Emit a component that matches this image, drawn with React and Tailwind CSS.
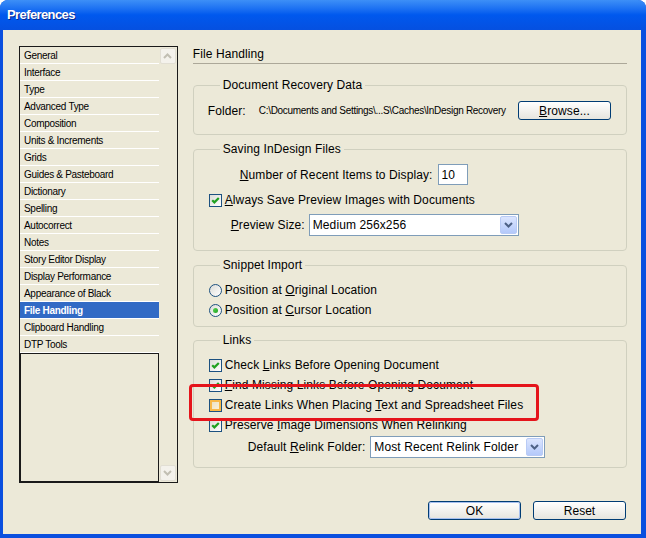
import React from 'react';

const listItems = [
  'General',
  'Interface',
  'Type',
  'Advanced Type',
  'Composition',
  'Units & Increments',
  'Grids',
  'Guides & Pasteboard',
  'Dictionary',
  'Spelling',
  'Autocorrect',
  'Notes',
  'Story Editor Display',
  'Display Performance',
  'Appearance of Black',
  'File Handling',
  'Clipboard Handling',
  'DTP Tools',
];

function Checkbox({ checked, hover }) {
  return (
    <span className="relative inline-flex h-[13px] w-[13px] shrink-0 items-center justify-center border border-[#1c5180] bg-gradient-to-br from-[#dcdcd7] to-white">
      {hover && <span className="absolute inset-0 border-2 border-[#f8b94a] bg-[#fde3a8]/40" />}
      {checked && (
        <svg width="11" height="11" viewBox="0 0 11 11" className="relative">
          <path d="M2.2 5.2 L4.4 7.4 L8.8 3" stroke="#21a121" strokeWidth="2.2" fill="none" />
        </svg>
      )}
    </span>
  );
}

function Radio({ checked }) {
  return (
    <span className="inline-flex h-[13px] w-[13px] shrink-0 items-center justify-center rounded-full border border-[#1c5180] bg-gradient-to-br from-[#dcdcd7] to-white">
      {checked && <span className="h-[5px] w-[5px] rounded-full bg-gradient-to-br from-[#55d651] to-[#21a121]" />}
    </span>
  );
}

function Select({ value, className }) {
  return (
    <div className={`flex h-[22px] items-center border border-[#7f9db9] bg-white pl-[3px] pr-[1px] ${className}`}>
      <span className="flex-1 text-[12px] leading-[14px]">{value}</span>
      <span className="flex h-[18px] w-[17px] items-center justify-center rounded-[2px] border border-[#b9cbf5] bg-gradient-to-b from-[#dbe5fe] to-[#b4c9fa]">
        <svg width="9" height="6" viewBox="0 0 9 6">
          <path d="M1 1 L4.5 4.5 L8 1" stroke="#4d6185" strokeWidth="2" fill="none" />
        </svg>
      </span>
    </div>
  );
}

function Button({ children, primary }) {
  return (
    <button className="flex h-[19px] w-[93px] items-center justify-center rounded-[3px] border border-[#003c74] bg-gradient-to-b from-white to-[#e6e5de] p-0 text-[12px] leading-[14px]">
      <span
        className={`flex h-full w-full items-center justify-center rounded-[2px] ${primary ? 'border border-[#a7c0ef]' : ''}`}
      >
        {children}
      </span>
    </button>
  );
}

function Fieldset({ title, className, children }) {
  return (
    <fieldset className={`rounded-[4px] border border-[#d0d0bf] px-[15px] ${className}`}>
      <legend className="ml-[11px] px-[3px] text-[12px] leading-[14px]">{title}</legend>
      {children}
    </fieldset>
  );
}

function ScrollArrow({ down }) {
  return (
    <div className="flex h-[16px] w-[16px] items-center justify-center rounded-[2px] border border-[#e2dfd4] bg-[#f4f2ec]">
      <svg width="9" height="6" viewBox="0 0 9 6">
        <path d={down ? 'M1 1 L4.5 4.5 L8 1' : 'M1 5 L4.5 1.5 L8 5'} stroke="#c2bfb3" strokeWidth="2" fill="none" />
      </svg>
    </div>
  );
}

export default function App() {
  return (
    <div className="h-[538px] w-[646px] bg-white text-black [font-family:'Liberation_Sans',Arial,sans-serif]">
      <div className="flex h-full flex-col overflow-hidden rounded-t-[8px] bg-[#0a4fdf]">
        <div className="flex h-[30px] shrink-0 items-center bg-gradient-to-b from-[#3d8ff7] via-[#0058ee] to-[#0550e0] pl-[7px]">
          <span className="text-[13px] font-bold tracking-[-0.6px] text-white [text-shadow:1px_1px_0_#0b2a8f]">
            Preferences
          </span>
        </div>

        <div className="mb-[4px] ml-[3px] mr-[5px] flex flex-1 flex-col bg-[#ece9d8] pl-[16px] pr-[14px] pt-[16px]">
          <div className="flex h-[437px]">
            {/* category list */}
            <div className="flex w-[159px] border border-[#1a1a1a]">
              <div className="flex w-[139px] flex-col">
                {listItems.map((item) => (
                  <div
                    key={item}
                    className={`flex h-[17px] shrink-0 items-center border-b border-white pl-[4px] text-[10px] tracking-[-0.3px] ${
                      item === 'File Handling' ? 'bg-[#316ac5] font-bold text-white' : 'bg-[#ece9d8]'
                    }`}
                  >
                    {item}
                  </div>
                ))}
                <div className="flex-1 border border-[#1a1a1a]" />
              </div>
              <div className="flex flex-1 flex-col items-center justify-between bg-[#ece9d8] py-[1px]">
                <ScrollArrow />
                <ScrollArrow down />
              </div>
            </div>

            {/* right panel */}
            <div className="relative ml-[15px] w-[435px] text-[12px] leading-[14px] tracking-[0.1px]">
              <div className="h-[18px] border-b border-[#aca899] pt-[1px]">File Handling</div>

              <Fieldset title="Document Recovery Data" className="mt-[14px] pb-[14px]">
                <div className="mt-[9px] flex h-[19px] items-center">
                  <span className="-ml-[1px]">Folder:</span>
                  <span className="ml-[13px] text-[10px] tracking-[-0.3px]">
                    C:\Documents and Settings\...S\Caches\InDesign Recovery
                  </span>
                  <div className="ml-auto">
                    <Button>
                      <u className="underline-offset-1">B</u>rowse...
                    </Button>
                  </div>
                </div>
              </Fieldset>

              <Fieldset title="Saving InDesign Files" className="mt-[7px] pb-[14px]">
                <div className="mt-[8px] flex h-[21px] items-center">
                  <span className="ml-[31px]">
                    <u className="underline-offset-1">N</u>umber of Recent Items to Display:
                  </span>
                  <span className="ml-[5px] flex h-[21px] w-[30px] items-center border border-[#7f9db9] bg-white pl-[3px]">
                    10
                  </span>
                </div>
                <div className="mt-[7px] flex h-[16px] items-center">
                  <Checkbox checked />
                  <span className="ml-[3px]">
                    <u className="underline-offset-1">A</u>lways Save Preview Images with Documents
                  </span>
                </div>
                <div className="mt-[6px] flex h-[22px] items-center">
                  <span className="ml-[22px]">
                    <u className="underline-offset-1">P</u>review Size:
                  </span>
                  <Select value="Medium 256x256" className="ml-[4px] w-[210px]" />
                </div>
              </Fieldset>

              <Fieldset title="Snippet Import" className="mt-[7px] pb-[8px]">
                <div className="mt-[10px] flex h-[16px] items-center">
                  <Radio />
                  <span className="ml-[3px]">
                    Position at <u className="underline-offset-1">O</u>riginal Location
                  </span>
                </div>
                <div className="mt-[4px] flex h-[16px] items-center">
                  <Radio checked />
                  <span className="ml-[3px]">
                    Position at <u className="underline-offset-1">C</u>ursor Location
                  </span>
                </div>
              </Fieldset>

              <Fieldset title="Links" className="mt-[6px] pb-[9px]">
                <div className="mt-[10px] flex h-[16px] items-center">
                  <Checkbox checked />
                  <span className="ml-[3px]">
                    Check <u className="underline-offset-1">L</u>inks Before Opening Document
                  </span>
                </div>
                <div className="mt-[4px] flex h-[16px] items-center">
                  <Checkbox checked />
                  <span className="ml-[3px]">
                    <u className="underline-offset-1">F</u>ind Missing Links Before Opening Document
                  </span>
                </div>
                <div className="mt-[4px] flex h-[16px] items-center">
                  <Checkbox hover />
                  <span className="ml-[3px]">
                    Create Links When Placing <u className="underline-offset-1">T</u>ext and Spreadsheet Files
                  </span>
                </div>
                <div className="mt-[4px] flex h-[16px] items-center">
                  <Checkbox checked />
                  <span className="ml-[3px]">
                    Preserve <u className="underline-offset-1">I</u>mage Dimensions When Relinking
                  </span>
                </div>
                <div className="mt-[3px] flex h-[22px] items-center">
                  <span className="ml-[39px]">
                    Default <u className="underline-offset-1">R</u>elink Folder:
                  </span>
                  <Select value="Most Recent Relink Folder" className="ml-[5px] w-[175px]" />
                </div>
              </Fieldset>

              {/* highlight annotation */}
              <div className="pointer-events-none absolute left-[-4px] top-[338px] h-[37px] w-[350px] rounded-[4px] border-[3px] border-[#e5141b]" />
            </div>
          </div>

          <div className="mt-[18px] flex justify-end gap-[12px] pr-[1px]">
            <Button primary>OK</Button>
            <Button>Reset</Button>
          </div>
        </div>
      </div>
    </div>
  );
}
